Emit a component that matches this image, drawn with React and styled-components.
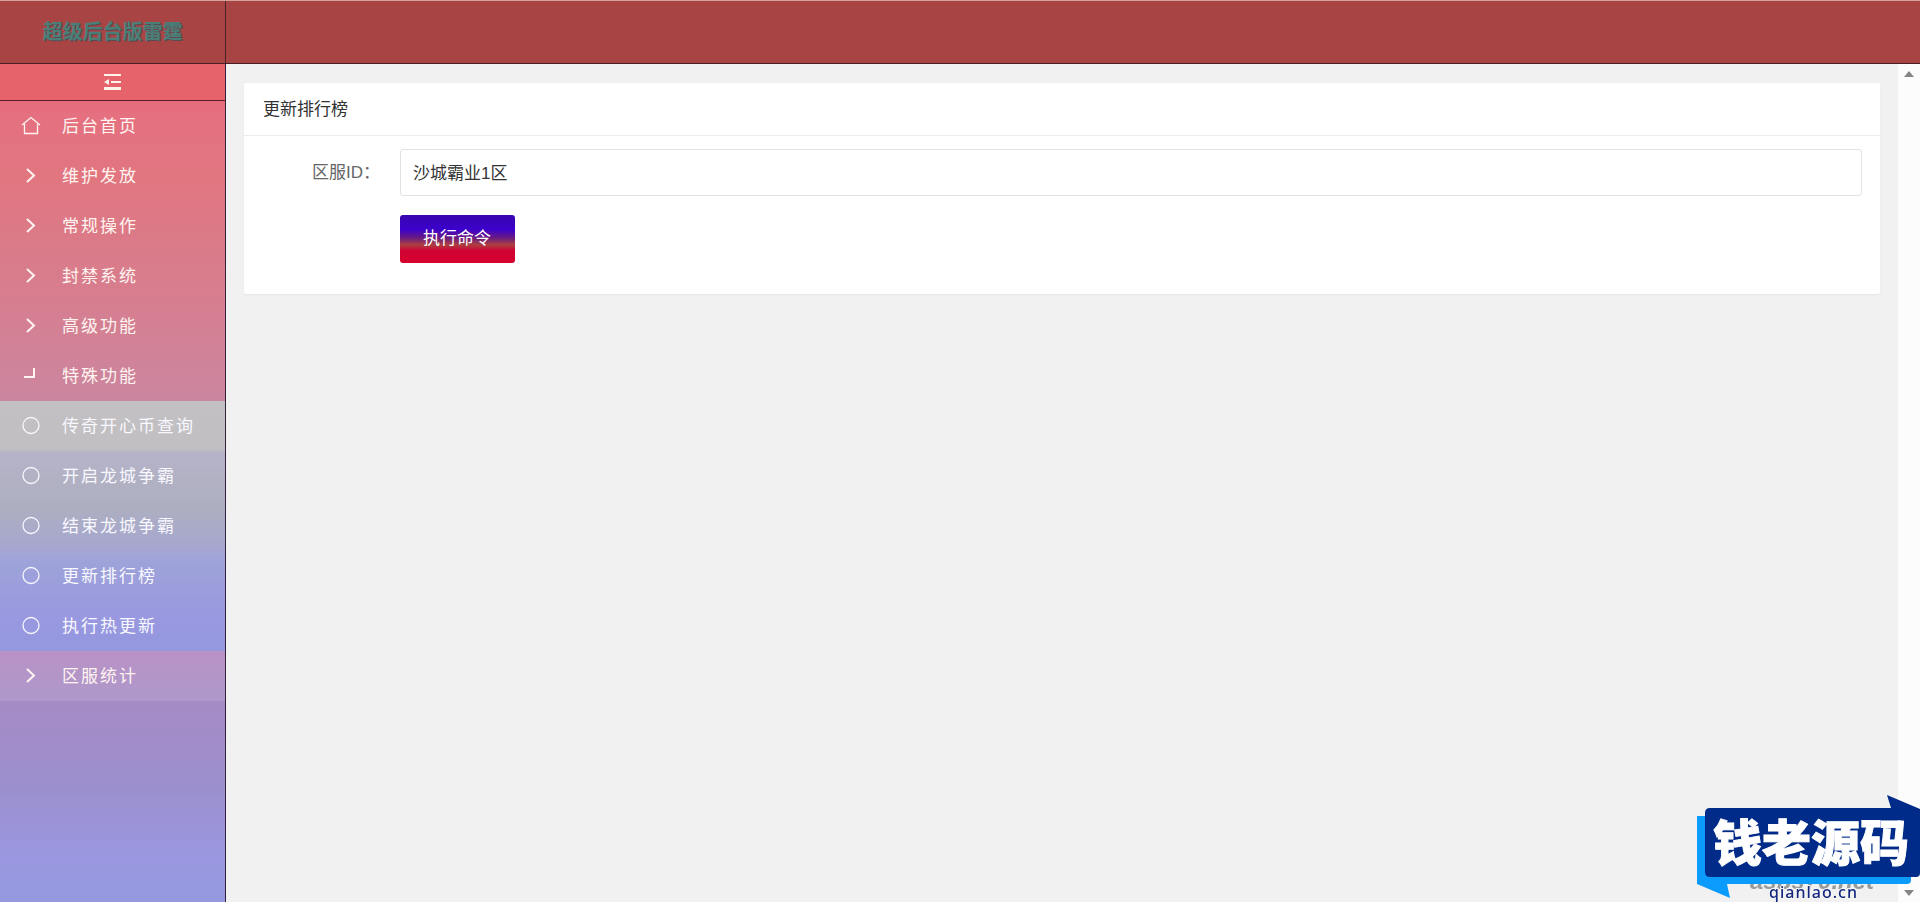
import React, { useState } from "react";
import styled, { createGlobalStyle, css } from "styled-components";

const GlobalStyle = createGlobalStyle`
  * {
    box-sizing: border-box;
  }

  body {
    margin: 0;
    background: #f1f1f1;
    color: #333;
    font-family: "Liberation Sans", "Noto Sans CJK SC", sans-serif;
    font-size: 17px;
    line-height: 24px;
  }
`;

const Page = styled.div`
  display: flex;
  flex-direction: column;
  height: 100vh;
`;

const Header = styled.header`
  display: flex;
  flex: none;
  height: 64px;
  background: #a94444;
  border-top: 1px solid #d3a29a;
  border-bottom: 1px solid #4a1f28;
`;

const Brand = styled.a`
  display: flex;
  align-items: center;
  justify-content: center;
  width: 226px;
  border-right: 1px solid #4a1f28;
  color: #4a7f78;
  font-size: 20px;
  font-weight: bold;
  text-decoration: none;
  text-shadow: 1px 1px 0 #5a4a52;
`;

const Body = styled.div`
  display: flex;
  flex: 1;
  min-height: 0;
`;

const Sidebar = styled.aside`
  flex: none;
  width: 226px;
  border-right: 1px solid #33203c;
  background: linear-gradient(#e8616b 0, #e57080 6%, #e07680 14%, #d57f92 30%, #cb869f 40%, #a48bc6 77%, #9c8fcd 86%, #9a97df 94%, #9599df 100%);
`;

const FoldButton = styled.button`
  display: flex;
  align-items: center;
  justify-content: center;
  width: 100%;
  height: 37px;
  padding: 0;
  border: 0;
  border-bottom: 1px solid #5e1a2c;
  background: #e6636c;
  color: #fff3ea;
  cursor: pointer;
`;

const Menu = styled.ul`
  margin: 0;
  padding: 0;
  list-style: none;
`;

const SubMenu = styled(Menu)`
  background: linear-gradient(#c3c0c4 0, #c1bfc1 19%, #b6b3c8 21%, #adafc0 42%, #a7a7cf 58%, #9ea3d9 64%, #9998e0 86%, #9498de 100%);
`;

const MenuLink = styled.a`
  display: flex;
  align-items: center;
  gap: 21px;
  height: 50px;
  padding-left: 21px;
  color: ${(props) => (props.$child ? "#f8f8ff" : "#fff4f0")};
  letter-spacing: 2px;
  text-decoration: none;

  ${(props) =>
    props.$tinted &&
    css`
      background: linear-gradient(#b992c6, #ae98cb);
    `}

  svg {
    flex: none;
  }
`;

const MenuText = styled.span`
  padding-top: 2px;
`;

const Main = styled.main`
  flex: 1;
  min-width: 0;
  padding: 19px 18px;
`;

const Card = styled.section`
  background: #fff;
  border-radius: 2px;
  box-shadow: 0 1px 2px rgba(0, 0, 0, 0.05);
`;

const CardTitle = styled.h1`
  margin: 0;
  padding: 15px 19px 13px;
  border-bottom: 1px solid #ececec;
  font-size: 17px;
  font-weight: normal;
`;

const Form = styled.form`
  display: grid;
  grid-template-columns: 137px 1fr;
  row-gap: 19px;
  padding: 13px 18px 31px 19px;
`;

const Label = styled.label`
  padding: 12px 20px 10px 0;
  color: #666;
  text-align: right;
`;

const Input = styled.input`
  width: 100%;
  height: 47px;
  padding: 0 12px 3px;
  border: 1px solid #e2e2e2;
  border-radius: 3px;
  background: #fff;
  color: #333;
  font: inherit;
  outline: 0;
`;

const Submit = styled.button`
  grid-column: 2;
  justify-self: start;
  height: 48px;
  padding: 0 24px 0 23px;
  border: 0;
  border-radius: 3px;
  background: linear-gradient(#3a06ae 0, #3c00cc 30%, #6a1c80 48%, #ac4040 62%, #cf0435 74%, #d6002c 100%);
  color: #fff;
  font: inherit;
  cursor: pointer;
`;

const ScrollTrack = styled.div`
  display: flex;
  flex: none;
  flex-direction: column;
  align-items: center;
  justify-content: space-between;
  width: 22px;
  padding: 7px 0 6px;
  background: #fcfcfc;
`;

const Watermark = styled.a`
  position: fixed;
  right: 0;
  bottom: 0;
  width: 226px;
  height: 110px;
`;

const menu = [
  { title: "后台首页", icon: "home" },
  { title: "维护发放", icon: "right" },
  { title: "常规操作", icon: "right" },
  { title: "封禁系统", icon: "right" },
  { title: "高级功能", icon: "right" },
  {
    title: "特殊功能",
    icon: "open",
    children: ["传奇开心币查询", "开启龙城争霸", "结束龙城争霸", "更新排行榜", "执行热更新"],
  },
  { title: "区服统计", icon: "right", tinted: true },
];

const paths = {
  home: <path d="M1 9l9-7.500 9 7.500M3.500 8v9.500h13V8" strokeWidth="1.3" />,
  right: <path d="m6 3 7 6.500-7 6.500" strokeWidth="2" />,
  open: <path d="M13 2v9H3" strokeWidth="2" />,
  circle: <circle cx="10" cy="9.500" r="8" strokeWidth="1.300" />,
};

function Icon({ name }) {
  return (
    <svg width="20" height="20" viewBox="0 0 20 20" fill="none" stroke="currentColor" aria-hidden="true">
      {paths[name]}
    </svg>
  );
}

function Arrow({ down }) {
  return (
    <svg width="10" height="6" viewBox="0 0 10 6" aria-hidden="true">
      <path d={down ? "M0 0h10L5 6z" : "M0 6h10L5 0z"} fill="#858585" />
    </svg>
  );
}

function SiteMark() {
  return (
    <Watermark href="#" aria-label="钱老源码 qianlao.cn">
      <svg width="226" height="110" viewBox="0 0 226 110">
        <text x="56" y="97" fill="#9a9a9a" fontFamily="Liberation Sans" fontSize="24" fontWeight="bold" fontStyle="italic">
          asbs70.net
        </text>
        <path d="M3 24h214v64q0 4-4 4H33l3 14L3 92z" fill="#0a9bfc" />
        <path d="M16 16h181l-4-13 33 14v64q0 4-4 4H16q-5 0-5-5V21q0-5 5-5z" fill="#002b89" />
        <text x="19" y="69" fill="#fff" stroke="#fff" fontFamily="Noto Sans CJK SC" fontSize="49" fontWeight="900">
          钱老源码
        </text>
        <text x="75" y="106" fill="#14287d" stroke="#f6f6f6" strokeWidth="2" paintOrder="stroke" fontFamily="Noto Sans" fontSize="16" fontWeight="500" letterSpacing="1">
          qianlao.cn
        </text>
      </svg>
    </Watermark>
  );
}

export default function App() {
  const [server, setServer] = useState("沙城霸业1区");

  return (
    <Page>
      <GlobalStyle />
      <Header>
        <Brand href="#">超级后台版雷霆</Brand>
      </Header>
      <Body>
        <Sidebar>
          <FoldButton type="button" aria-label="收起菜单">
            <svg width="18" height="16" viewBox="0 0 18 16" fill="currentColor" aria-hidden="true">
              <path d="M0 0h17v2H0zM7 7h10v2H7zM0 13h17v3H0zM0 8l5-3v6z" />
            </svg>
          </FoldButton>
          <nav>
            <Menu>
              {menu.map((item) => (
                <li key={item.title}>
                  <MenuLink href="#" $tinted={item.tinted}>
                    <Icon name={item.icon} />
                    <MenuText>{item.title}</MenuText>
                  </MenuLink>
                  {item.children && (
                    <SubMenu>
                      {item.children.map((child) => (
                        <li key={child}>
                          <MenuLink href="#" $child>
                            <Icon name="circle" />
                            <MenuText>{child}</MenuText>
                          </MenuLink>
                        </li>
                      ))}
                    </SubMenu>
                  )}
                </li>
              ))}
            </Menu>
          </nav>
        </Sidebar>
        <Main>
          <Card>
            <CardTitle>更新排行榜</CardTitle>
            <Form onSubmit={(e) => e.preventDefault()}>
              <Label htmlFor="server">区服ID：</Label>
              <Input id="server" value={server} onChange={(e) => setServer(e.target.value)} />
              <Submit type="submit">执行命令</Submit>
            </Form>
          </Card>
        </Main>
        <ScrollTrack>
          <Arrow />
          <Arrow down />
        </ScrollTrack>
      </Body>
      <SiteMark />
    </Page>
  );
}
